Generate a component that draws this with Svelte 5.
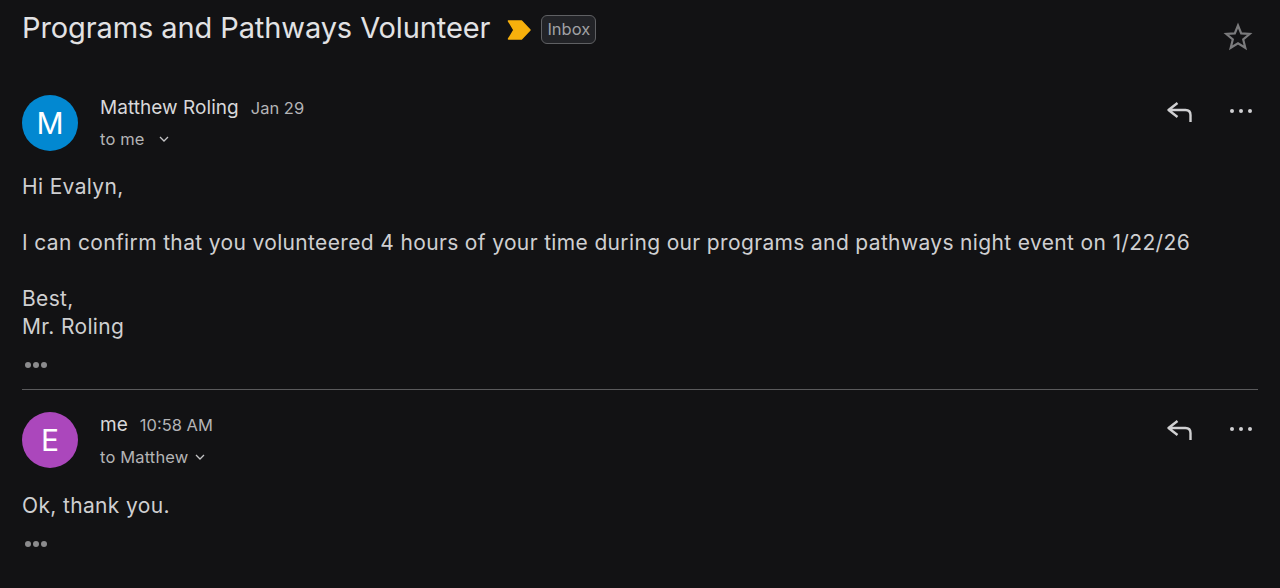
<script>
  const messages = [
    {
      initial: 'M',
      color: '#0288d1',
      sender: 'Matthew Roling',
      when: 'Jan 29',
      to: 'to me',
      wide: true,
      body: ['Hi Evalyn,', '', 'I can confirm that you volunteered 4 hours of your time during our programs and pathways night event on 1/22/26', '', 'Best,', 'Mr. Roling']
    },
    {
      initial: 'E',
      color: '#ab47bc',
      sender: 'me',
      when: '10:58 AM',
      to: 'to Matthew',
      wide: false,
      body: ['Ok, thank you.']
    }
  ]
</script>

<main>
  <header>
    <h1>Programs and Pathways Volunteer</h1>
    <svg class="marker" width="24" height="20" viewBox="0 0 24 20"><path d="M1.500 1h13L23 10l-8.500 9h-13l5.500-9z" fill="#f7b00c" stroke="#f7b00c" stroke-width="1.500" stroke-linejoin="round" /></svg>
    <span class="label">Inbox</span>
    <svg class="star" width="30" height="30" viewBox="0 0 30 30"><path d="M15 3.500l3.200 7.900 8.500.6-6.500 5.500 2.100 8.300-7.300-4.500-7.300 4.500 2.100-8.300L3.300 12l8.500-.6z" fill="none" stroke="#7b7b7d" stroke-width="2.200" stroke-linejoin="miter" /></svg>
  </header>

  {#each messages as m, i (m.sender)}
    <section class:last={i === messages.length - 1}>
      <div class="head">
        <div class="avatar" style="background: {m.color}">{m.initial}</div>
        <div class="who">
          <div class="line1"><span class="sender">{m.sender}</span><span class="when">{m.when}</span></div>
          <div class="line2" class:wide={m.wide}>
            <span>{m.to}</span>
            <svg width="10" height="6" viewBox="0 0 10 6"><path d="M1 1l4 4 4-4" fill="none" stroke="#c4c4c6" stroke-width="1.300" /></svg>
          </div>
        </div>
        <div class="actions">
          <svg width="28" height="24" viewBox="0 0 28 24"><path d="M11.500 4L2.500 11l9 7M3 11h16.500q5 0 5 5v7" fill="none" stroke="#d0d0d2" stroke-width="2.400" stroke-linejoin="round" /></svg>
          <svg class="more" width="24" height="6" viewBox="0 0 24 6"><circle cx="3" cy="3" r="2" fill="#d0d0d2" /><circle cx="12" cy="3" r="2" fill="#d0d0d2" /><circle cx="21" cy="3" r="2" fill="#d0d0d2" /></svg>
        </div>
      </div>
      <div class="body">
        {#each m.body as line}
          <p>{line || '\u00a0'}</p>
        {/each}
      </div>
      <div class="trim"><i></i><i></i><i></i></div>
    </section>
  {/each}
</main>

<style>
  :global(body) {
    background: #121214;
    height: 588px;
    overflow: hidden;
  }

  main {
    padding: 0 22px;
    font-family: Inter, "Noto Sans", sans-serif;
    color: #d0d0d2;
  }

  header {
    display: flex;
    align-items: center;
    height: 56px;
  }

  h1 {
    margin: 0 0 2px;
    font-size: 29px;
    font-weight: 400;
    letter-spacing: -0.1px;
    color: #e2e2e4;
  }

  .marker {
    margin: 3px 0 0 17px;
  }

  .label {
    margin: 3px 0 0 10px;
    border: 1px solid #5f6063;
    border-radius: 6px;
    background: #222327;
    color: #a0a1a4;
    font-size: 16.500px;
    line-height: 27px;
    padding: 0 5px;
  }

  .star {
    margin: 17px 5px 0 auto;
  }

  section {
    padding-top: 39px;
    padding-bottom: 21px;
    border-bottom: 1px solid #5a5a5c;
  }

  section + section {
    padding-top: 22px;
  }

  section.last {
    border-bottom: 0;
  }

  .head {
    display: flex;
    align-items: flex-start;
  }

  .avatar {
    width: 56px;
    height: 56px;
    border-radius: 50%;
    color: #fff;
    font-size: 30px;
    line-height: 56px;
    text-align: center;
  }

  .who {
    margin-left: 22px;
    padding-top: 1px;
  }

  .line1 {
    display: flex;
    align-items: baseline;
    height: 24px;
    line-height: 24px;
  }

  .sender {
    font-size: 19px;
    letter-spacing: 0.05px;
    color: #d8d8da;
  }

  .when {
    margin-left: 12px;
    font-size: 16.500px;
    color: #b4b4b6;
  }

  .line2 {
    display: flex;
    align-items: center;
    gap: 7px;
    margin-top: 9px;
    font-size: 16.500px;
    letter-spacing: 0.15px;
    line-height: 20px;
    color: #b4b4b6;
  }

  .line2.wide {
    gap: 14px;
  }

  .last .line2 {
    margin-top: 10px;
  }

  .actions {
    margin-left: auto;
    display: flex;
    align-items: center;
    gap: 35px;
    padding-top: 4px;
  }

  .last .actions {
    padding-top: 5px;
  }

  .more {
    margin-right: 5px;
  }

  .body {
    margin-top: 22px;
    font-size: 21px;
    line-height: 28px;
    letter-spacing: 0.35px;
    color: #cfcfd1;
  }

  .last .body {
    margin-top: 24px;
  }

  p {
    margin: 0;
  }

  .trim {
    display: flex;
    gap: 2px;
    margin: 21px 0 0 3px;
  }

  .trim i {
    width: 6px;
    height: 6px;
    border-radius: 50%;
    background: #8b8b8d;
  }
</style>
